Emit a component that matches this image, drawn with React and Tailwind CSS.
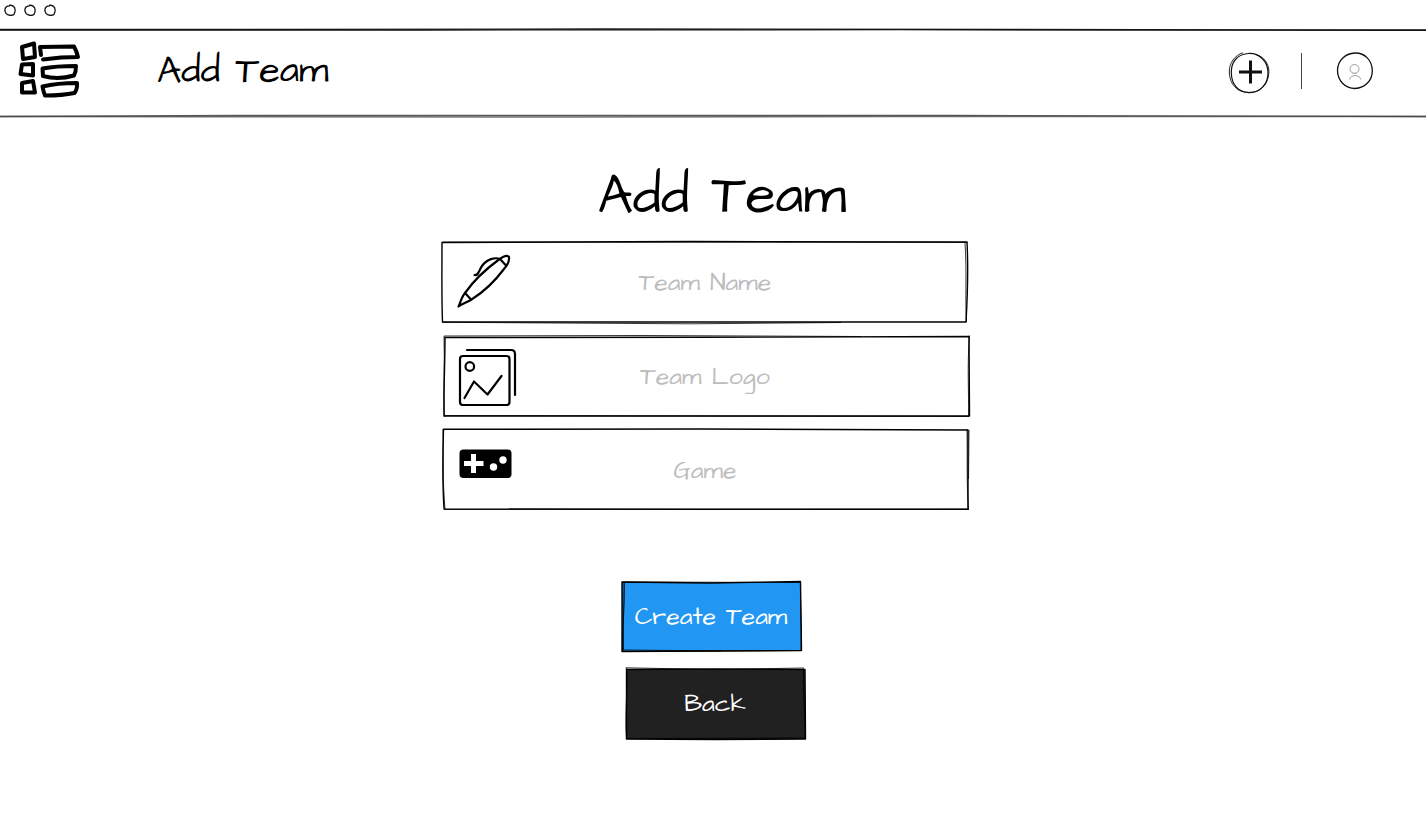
import React from 'react';

const HAND = "font-['Architects_Daughter','Lato',sans-serif]";

function Rule({ soft }) {
  return (
    <svg className="block h-1 w-full shrink-0" viewBox="0 0 1426 4" preserveAspectRatio="none" fill="none" aria-hidden="true">
      {soft ? (
        <>
          <path d="M0 2.500 L240 1.500 L950 1.500 L1426 2.500" stroke="#222" strokeOpacity=".75" strokeWidth="1.3" />
          <path d="M0 2.500 L200 2.700 L560 3 L900 2.500 L1426 2.500" stroke="#444" strokeOpacity=".75" strokeWidth="1.4" />
        </>
      ) : (
        <>
          <path d="M0 1.500 L600 1 L1426 2" stroke="#222" strokeWidth="1.3" />
          <path d="M0 2 L420 2 L900 1.700 L1426 2.300" stroke="#111" strokeWidth="1.3" />
        </>
      )}
    </svg>
  );
}

function WindowDots() {
  return (
    <div className="flex h-7 items-start gap-2 px-1 pt-1" aria-hidden="true">
      {[0, 1, 2].map((i) => (
        <svg key={i} className="h-3 w-3" viewBox="0 0 12 12" fill="none" stroke="#111" strokeWidth="1.3">
          <path d="M5 1.400 C8 .7 11 2.500 11.100 5.800 C11.200 9.100 9.300 11.300 6.800 11.500 C3.800 11.100 1 9.400 .9 6.200 C.9 3.500 2.500 1.700 6 1.800" />
        </svg>
      ))}
    </div>
  );
}

function Logo() {
  return (
    <svg className="h-[60px] w-16" viewBox="0 0 64 60" fill="none" stroke="#000" strokeWidth="4" strokeLinejoin="round" strokeLinecap="round" aria-hidden="true">
      <path d="M5 7 L17 3.500 L18 17 L6 19 Z" />
      <path d="M5 24.500 L16 24 L16 35.500 L3.500 34 Z" />
      <path d="M5 43 L16 41 L18 52.500 L5 52.500 Z" />
      <path d="M24 15 L23 7 L57 6.500 Q59.500 11 61 17 L44 17.500 L26 19.500" />
      <path d="M25.500 28.500 C36 26.500 48 26 59 26 Q59 32 57 35.500 C47 38.500 35 38.500 26 36 Z" />
      <path d="M25.500 46.500 C36 44 48 43 60 43 Q60.500 49 57.500 53 C48 55 36 55.500 28 55.500 Q26.500 52 25.500 46.500 Z" />
    </svg>
  );
}

function PlusCircle() {
  return (
    <svg className="h-[42px] w-[42px]" viewBox="0 0 42 42" fill="none" stroke="#111" aria-hidden="true">
      <path d="M20 1.500 C31 .5 39.500 9 40 20 C40.500 32 32 41 21 40.700 C10 40.500 3.500 32 3.300 21 C3 10 9 2.500 20 1.500" strokeWidth="1.2" />
      <path d="M15 .8 C7 3 1 11 1.300 20 C1.600 29 5 34 10 37.500 C16 41 25 41.500 31 38 C38 34 40.800 27 40.900 19 C40.500 11 36 5 28 2.500" strokeWidth=".9" />
      <path d="M22.500 8.500 V31.500 M11 20 H34" strokeWidth="3" />
    </svg>
  );
}

function Avatar() {
  return (
    <svg className="h-[38px] w-[38px]" viewBox="0 0 38 38" fill="none" stroke="#111" aria-hidden="true">
      <path d="M19 1 C29 .7 36 8.500 36.300 18.500 C36.500 28.500 29 36 19 36.500 C9 36.500 1.600 28.500 1.500 18.500 C1.500 8.500 9 1.500 19 1" strokeWidth="1.3" />
      <circle cx="18.500" cy="17" r="4.500" stroke="#888" strokeWidth=".8" />
      <path d="M13.500 27.500 C15 22.500 22.500 22 25 27.500" stroke="#777" strokeWidth=".8" />
      <path d="M16 21 H21" stroke="#aaa" strokeWidth=".6" />
    </svg>
  );
}

function PenIcon() {
  return (
    <svg className="h-[60px] w-[60px]" viewBox="0 0 60 60" fill="none" stroke="#000" strokeWidth="2.2" strokeLinecap="round" strokeLinejoin="round" aria-hidden="true">
      <path d="M1.500 54.500 C3.500 50.500 4.500 45 8 41 C15 31 29 17 42 7.500 C47 3.800 50.500 3 52 5 C52.500 9 50.500 13 47 17 C38 29 25 41 14.500 47.500 C10 50.500 5 51.500 1.500 54.500 Z" />
      <path d="M8 41 L14 47.500 M43 7 L49 13.500" />
      <path d="M43 7 C38 5 30 7 25 14 C21.500 19 21.500 24 17.500 23" />
    </svg>
  );
}

function ImagesIcon() {
  return (
    <svg className="h-[60px] w-[60px]" viewBox="0 0 60 60" fill="none" stroke="#000" strokeWidth="2.2" strokeLinecap="round" strokeLinejoin="round" aria-hidden="true">
      <rect x="3" y="10" width="49.500" height="49" rx="3" />
      <path d="M10 4 H54 Q58 4 58 8 V49" />
      <circle cx="12.800" cy="20.500" r="4.300" />
      <path d="M7.500 52 L17 35.500 L30.500 48.500 L44.500 30" />
    </svg>
  );
}

function GamepadIcon() {
  return (
    <svg className="h-[60px] w-[60px]" viewBox="0 0 60 60" aria-hidden="true">
      <rect x="2.500" y="9.500" width="52" height="28.500" rx="4" fill="#000" />
      <path d="M16.500 14 V33 M7 23.500 H26.500" stroke="#fff" strokeWidth="5" />
      <circle cx="36.500" cy="27" r="3.700" fill="#fff" />
      <circle cx="46" cy="20" r="3.700" fill="#fff" />
    </svg>
  );
}

/* Two loose passes of the pen around a box; `fill` colours the inside. */
function Frame({ width, height, lines, fill = 'none' }) {
  return (
    <svg
      className="pointer-events-none col-start-1 row-start-1 block h-full w-full overflow-visible"
      viewBox={`0 0 ${width} ${height}`}
      preserveAspectRatio="none"
      fill="none"
      stroke="#000"
      strokeLinejoin="round"
      aria-hidden="true"
    >
      {lines.map((d, i) => (
        <path key={d} d={d} fill={i === 0 ? fill : 'none'} strokeWidth={i === 0 ? 1.4 : 0.8} vectorEffect="non-scaling-stroke" />
      ))}
    </svg>
  );
}

const fields = [
  {
    id: 'team-name',
    label: 'Team Name',
    Icon: PenIcon,
    lines: [
      'M1 1.500 L250 .5 L526 1 C527.500 30 526.500 55 525 81 L260 81 L1.500 81 C.500 55 1 30 1 1.500 Z',
      'M1.500 1 L526.500 1.500 M524 2 C526 30 524 60 525.500 81 M400 81.500 L250 82.800 L1 81.300',
    ],
  },
  {
    id: 'team-logo',
    label: 'Team Logo',
    Icon: ImagesIcon,
    lines: [
      'M4 2.500 L260 2.300 L528 1.500 L528.500 81 L260 81 L3 81 C2.500 55 4 30 4 2.500 Z',
      'M3 1 L200 .5 L420 1.500 M3 1 C4 28 2 55 3.500 82 M528.500 .5 C526 30 528 60 527.500 81 M3 80.500 L528 81.500',
    ],
  },
  {
    id: 'game',
    label: 'Game',
    Icon: GamepadIcon,
    lines: [
      'M2.500 .3 L260 0 L527 1 L527 80.300 L260 80.300 L3 80 C1.500 55 1.500 30 2.500 .3 Z',
      'M2 0 C2.500 30 1.500 52 4 80 M526 0 C526.500 30 525.500 55 527.500 81 M528 1 L527.500 50 M3 80.500 L527 80.200',
    ],
  },
];

const buttons = [
  {
    label: 'Create Team',
    type: 'submit',
    fill: '#2196f3',
    align: 'self-start',
    lines: [
      'M1 1 L90 2 L179.500 .5 L180.500 69.500 L90 70 L1 70.500 Z',
      'M2 1 L179 1.500 M3.500 1 C4 25 1 48 1.500 70 M2 2 L2.500 69 M179.500 0 C179 25 181 48 180 70 M1 70.500 L179 69.500 M1 69 L100 70',
    ],
  },
  {
    label: 'Back',
    type: 'button',
    fill: '#212121',
    align: 'self-end',
    lines: [
      'M1.500 1.500 L90 1 L180 1.500 L180.500 71 L90 71.500 L1.500 71 Z',
      'M.5 -.2 L90 1.500 L179 0 M1.500 0 C3 25 -.500 45 1.500 71 M178.500 .5 C178 25 180 45 180.500 71 M1 70.500 L180 70',
    ],
  },
];

export default function App() {
  return (
    <div className={`min-h-screen bg-white text-black ${HAND}`}>
      <WindowDots />
      <Rule />
      <header className="flex h-[82px] items-center pr-[52px] pb-1 pl-[17px]">
        <a href="#" aria-label="Home" className="-mt-0.5">
          <Logo />
        </a>
        <h2 className="ml-[76px] text-[38px] leading-[48px]">Add Team</h2>
        <div className="ml-auto flex items-center">
          <button type="button" aria-label="Add" className="pt-1">
            <PlusCircle />
          </button>
          <div className="mr-[34px] ml-[31px] h-9 w-px bg-[#444]" />
          <button type="button" aria-label="Profile">
            <Avatar />
          </button>
        </div>
      </header>
      <Rule soft />

      <main className="pt-11 pb-12">
        <h1 className="pl-[18px] text-center text-[55px] leading-[68px]">Add Team</h1>
        <form className="mt-[11px]" onSubmit={(e) => e.preventDefault()}>
          <div className="pr-4">
            <div className="mx-auto flex w-full max-w-[528px] flex-col gap-3">
              {fields.map(({ id, label, Icon, lines }) => (
                <div key={id} className="grid h-[82px] grid-cols-1 grid-rows-1 items-center">
                  <Frame width={528} height={82} lines={lines} />
                  <label htmlFor={id} className="pointer-events-none col-start-1 row-start-1 ml-4 justify-self-start">
                    <Icon />
                  </label>
                  <input
                    id={id}
                    type="text"
                    aria-label={label}
                    placeholder={label}
                    className="col-start-1 row-start-1 h-full w-full bg-transparent px-20 text-center text-[25px] leading-[48px] outline-none placeholder:text-[#bdbdbd]"
                  />
                </div>
              ))}
            </div>
          </div>
          <div className="mx-auto mt-[70px] flex w-[185px] flex-col gap-4">
            {buttons.map(({ label, type, fill, align, lines }) => (
              <button key={label} type={type} className={`grid h-[71px] w-[181px] grid-cols-1 grid-rows-1 items-center ${align}`}>
                <Frame width={181} height={71} lines={lines} fill={fill} />
                <span className="z-10 col-start-1 row-start-1 text-[25px] whitespace-nowrap text-white">{label}</span>
              </button>
            ))}
          </div>
        </form>
      </main>
    </div>
  );
}
